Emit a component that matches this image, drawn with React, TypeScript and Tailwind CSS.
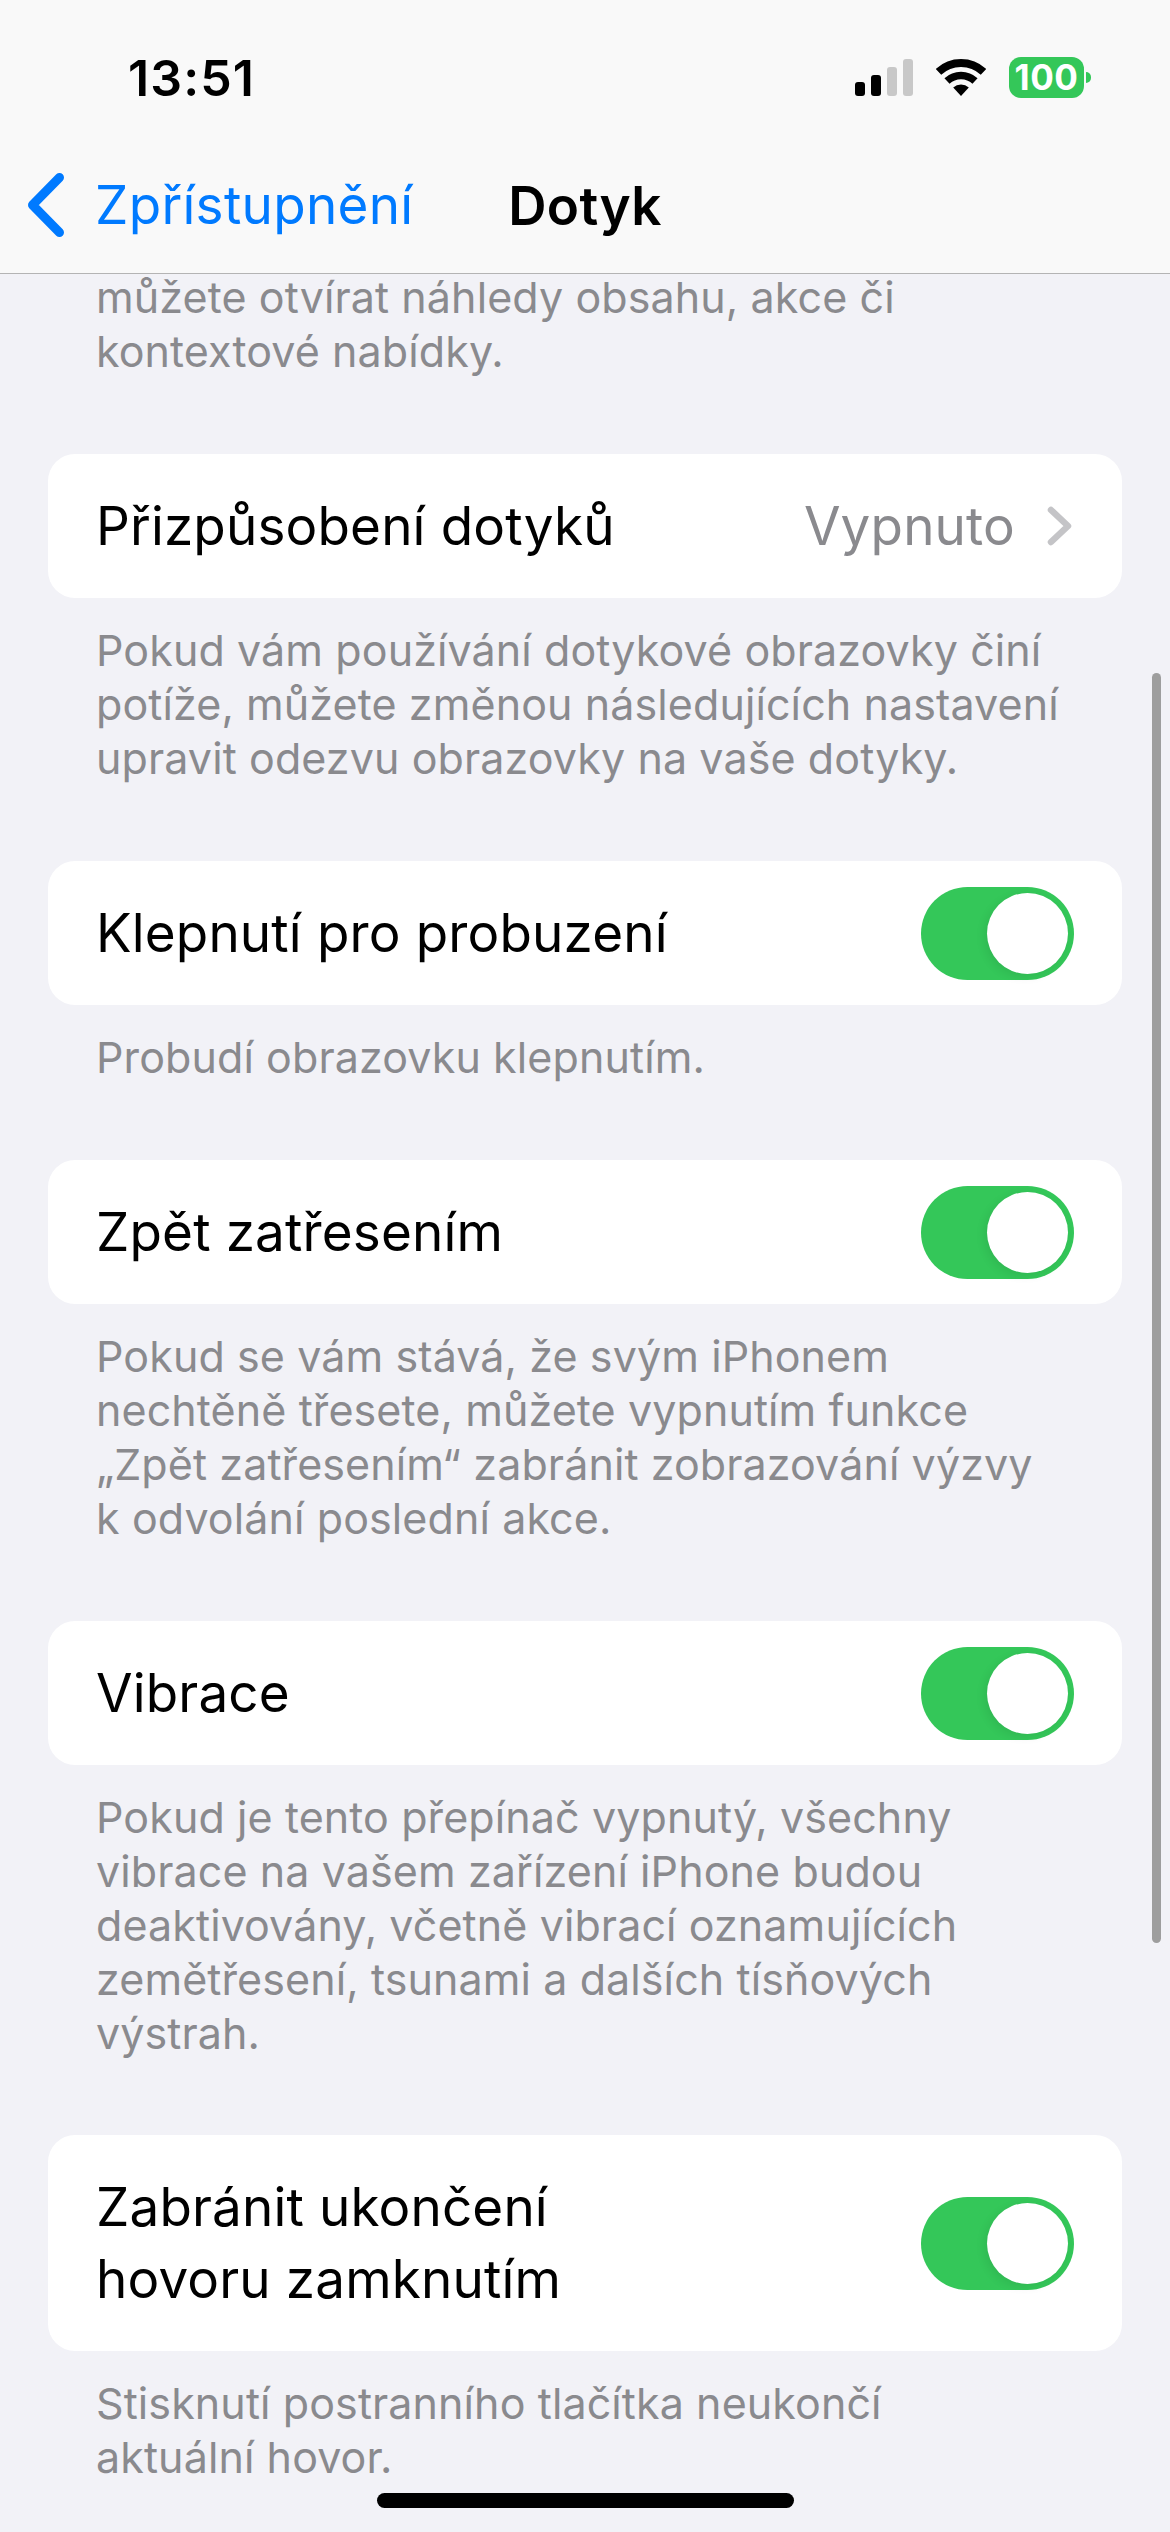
import { ReactNode } from 'react'

function Toggle() {
  return (
    <div className="flex h-[93px] w-[153px] shrink-0 items-center justify-end rounded-full bg-[#34c759] p-[6px]">
      <div className="h-[81px] w-[81px] rounded-full bg-white shadow-[-3px_3px_10px_rgba(0,0,0,0.08)]" />
    </div>
  )
}

function Footer({ children }: { children: ReactNode }) {
  return (
    <p className="mt-[25px] pl-[48px] text-[43px] leading-[54px] tracking-[0.1px] whitespace-nowrap text-[#8a8a8e]">
      {children}
    </p>
  )
}

function ToggleRow({ children }: { children: ReactNode }) {
  return (
    <div className="flex items-center justify-between rounded-[27px] bg-white pr-[48px] pl-[48px] text-[53px] leading-[72px] tracking-[0.15px] text-black">
      <div className="py-[36px]">{children}</div>
      <Toggle />
    </div>
  )
}

function Signal() {
  return (
    <div className="flex items-end gap-[6px]">
      <div className="h-[14px] w-[10px] rounded-[3px] bg-black" />
      <div className="h-[21px] w-[10px] rounded-[3px] bg-black" />
      <div className="h-[29px] w-[10px] rounded-[3px] bg-[#c8c8c8]" />
      <div className="h-[37px] w-[10px] rounded-[3px] bg-[#c8c8c8]" />
    </div>
  )
}

function Wifi() {
  return (
    <svg width="50" height="37" viewBox="0 0 50 37" fill="none">
      <path d="M2.5 12.9A33 33 0 0 1 47.5 12.9" stroke="#000" strokeWidth="8" />
      <path d="M11 22A20.5 20.5 0 0 1 39 22" stroke="#000" strokeWidth="7.5" />
      <path d="M25 37L17.2 28.6A11.5 11.5 0 0 1 32.8 28.6Z" fill="#000" />
    </svg>
  )
}

function Battery() {
  return (
    <div className="flex items-center gap-[2px]">
      <div className="flex h-[41px] w-[75px] items-center justify-center rounded-[12px] bg-[#34c759] text-[35px] font-bold tracking-[0.5px] text-white">
        100
      </div>
      <div className="h-[11px] w-[5px] rounded-r-full bg-[#34c759]" />
    </div>
  )
}

export default function App() {
  return (
    <div
      className="relative h-[2532px] w-[1170px] overflow-hidden bg-[#f2f2f7]"
      style={{ fontFamily: 'Inter, "Noto Sans", sans-serif' }}
    >
      {/* Status + nav */}
      <header className="relative z-10 h-[274px] border-b border-[#b4b4b4] bg-[#f9f9f9]">
        <div className="flex h-[156px] items-start justify-between pt-[50px] pr-[79px] pl-[128px]">
          <span className="text-[50px] leading-[56px] font-semibold tracking-[1.1px] text-black">13:51</span>
          <div className="mt-[7px] flex items-center gap-[23px]">
            <Signal />
            <Wifi />
            <Battery />
          </div>
        </div>
        <div className="relative flex h-[117px] items-start justify-center pt-[20px]">
          <div className="absolute top-[17px] left-[28px] flex items-center gap-[31px]">
            <svg width="36" height="64" viewBox="0 0 36 64" fill="none">
              <path d="M31.5 4.5L4.5 32L31.5 59.5" stroke="#007aff" strokeWidth="9" strokeLinecap="round" strokeLinejoin="round" />
            </svg>
            <span className="text-[53px] leading-[60px] tracking-[0.3px] text-[#007aff]">Zpřístupnění</span>
          </div>
          <span className="text-[53px] leading-[60px] font-semibold tracking-[0.3px] text-black">Dotyk</span>
        </div>
      </header>

      <main className="-mt-[4px] px-[48px]">
        <p className="pl-[48px] text-[43px] leading-[54px] tracking-[0.1px] whitespace-nowrap text-[#8a8a8e]">
          můžete otvírat náhledy obsahu, akce či
          <br />
          kontextové nabídky.
        </p>

        <div className="mt-[76px] flex items-center justify-between rounded-[27px] bg-white py-[36px] pr-[49px] pl-[48px] text-[53px] leading-[72px] tracking-[0.15px] text-black">
          <span>Přizpůsobení dotyků</span>
          <div className="flex items-center gap-[31px] text-[#8a8a8e]">
            <span>Vypnuto</span>
            <svg width="27" height="40" viewBox="0 0 27 40" fill="none">
              <path d="M5 4L22 20L5 36" stroke="#c4c4c7" strokeWidth="6.5" strokeLinecap="round" strokeLinejoin="round" />
            </svg>
          </div>
        </div>
        <Footer>
          Pokud vám používání dotykové obrazovky činí
          <br />
          potíže, můžete změnou následujících nastavení
          <br />
          upravit odezvu obrazovky na vaše dotyky.
        </Footer>

        <div className="mt-[76px]">
          <ToggleRow>Klepnutí pro probuzení</ToggleRow>
          <Footer>Probudí obrazovku klepnutím.</Footer>
        </div>

        <div className="mt-[76px]">
          <ToggleRow>Zpět zatřesením</ToggleRow>
          <Footer>
            Pokud se vám stává, že svým iPhonem
            <br />
            nechtěně třesete, můžete vypnutím funkce
            <br />
            „Zpět zatřesením“ zabránit zobrazování výzvy
            <br />k odvolání poslední akce.
          </Footer>
        </div>

        <div className="mt-[76px]">
          <ToggleRow>Vibrace</ToggleRow>
          <Footer>
            Pokud je tento přepínač vypnutý, všechny
            <br />
            vibrace na vašem zařízení iPhone budou
            <br />
            deaktivovány, včetně vibrací oznamujících
            <br />
            zemětřesení, tsunami a dalších tísňových
            <br />
            výstrah.
          </Footer>
        </div>

        <div className="mt-[75px]">
          <ToggleRow>
            Zabránit ukončení
            <br />
            hovoru zamknutím
          </ToggleRow>
          <Footer>
            Stisknutí postranního tlačítka neukončí
            <br />
            aktuální hovor.
          </Footer>
        </div>
      </main>

      {/* Scroll indicator */}
      <div className="absolute top-[673px] right-[9px] h-[1270px] w-[9px] rounded-full bg-[#9e9e9e]" />
      {/* Home indicator */}
      <div className="absolute top-[2493px] left-[377px] h-[15px] w-[417px] rounded-full bg-black" />
    </div>
  )
}
